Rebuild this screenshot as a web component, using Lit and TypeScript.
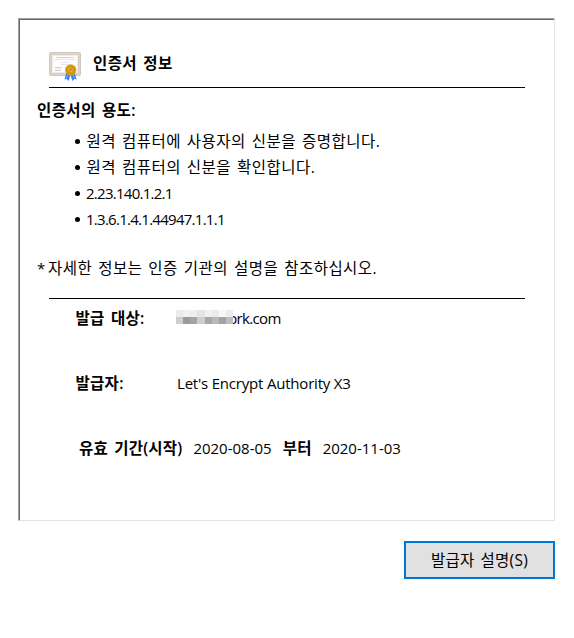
import { LitElement, html, css } from "lit";
import { customElement } from "lit/decorators.js";

const MASK = [
  ["#ebebea", "#f2f2f3", "#eeeeee", "#e4e4e3", "#f0f0f2", "#e8ecee", "#f8f8f8", "#ececed"],
  ["#ced0cc", "#9a9a9b", "#a3a4a4", "#cdcdd0", "#a6a6aa", "#bab8b1", "#a3a4a7", "#bdbdc8"],
];

@customElement("cert-icon")
class CertIcon extends LitElement {
  static styles = css`
    :host { display: block; width: 34px; height: 32px; }
    svg { display: block; }
  `;
  render() {
    return html`<svg width="34" height="32" viewBox="0 0 34 32">
      <rect x=".5" y="2.500" width="31" height="23" rx="1" fill="#d9d0c3" stroke="#cfc7bb"/>
      <rect x="1.500" y="3.500" width="29" height="21" fill="none" stroke="#ddd5c9"/>
      <rect x="3.500" y="5.500" width="25" height="17" fill="#fefefe" stroke="#f1eee9"/>
      <path d="M7 7.500h18" stroke="#c9cee2"/>
      <path d="M5 9.500h22M12 12.500h8M12 14.500h8" stroke="#e4e7f1"/>
      <path d="M6 17.500h7M6 20.500h6" stroke="#ccd0da"/>
      <path d="M6 19h6" stroke="#e6e8ee"/>
      <path d="M17.500 22l-2 7.500 2.200-.4 2 1.900 2-7zM25.500 22l2 7.500-2.200-.4-2 1.900-2-7z" fill="#3c7eea"/>
      <path d="M18.500 25.500l-1 3M24.500 25.500l1 3" stroke="#76acf5" stroke-width="1.200"/>
      <circle cx="21.700" cy="20" r="5.700" fill="#dda31d"/>
      <circle cx="21.700" cy="20" r="4.600" fill="#d1930f"/>
      <circle cx="21.400" cy="19.800" r="2.600" fill="#e0ae2c"/>
      <path d="M20.300 21.200l2.400-2.800" stroke="#b57c0c" stroke-width="1.200"/>
    </svg>`;
  }
}

@customElement("app-root")
class AppRoot extends LitElement {
  static styles = css`
    :host {
      display: block; box-sizing: border-box; width: 574px; height: 638px; padding: 18px 19px 0 18px;
      background: #fff; color: #000; overflow: hidden;
      font: 15px/26px "Open Sans", "Noto Sans CJK KR", sans-serif; white-space: nowrap;
    }
    .panel {
      box-sizing: border-box; height: 503px; border: 1px solid; border-color: #a0a0a0 #e3e3e3 #e3e3e3 #a0a0a0;
    }
    .inner { box-sizing: border-box; height: 501px; border: solid #696969; border-width: 1px 0 0 1px; padding: 28px 29px 0 17px; }
    .head { display: flex; height: 39px; margin-left: 12px; border-bottom: 1px solid #000; }
    .head cert-icon { margin-top: 2px; }
    .title { margin: 2px 0 0 10px; }
    b { font-size: 15.500px; font-weight: 600; letter-spacing: .38px; word-spacing: 2px; }
    .usage { margin-top: 9px; height: 26px; }
    .ko { font-size: 15.500px; letter-spacing: .47px; word-spacing: 1.500px; }
    .star { display: inline-block; width: 11px; }
    ul { margin: 5px 0 0; padding: 0 0 0 38px; list-style: none; }
    li { display: flex; align-items: center; height: 26px; }
    li::before { content: ""; width: 5px; height: 5px; border-radius: 50%; background: #000; margin: 0 6px 0 0; }
    li .ko { margin: -1px 0 0 .5px; }
    .num { letter-spacing: -.73px; }
    .note { margin-top: 23px; height: 26px; }
    .rule { height: 1px; background: #000; margin: 17px 0 0 12px; }
    .field { display: flex; height: 26px; margin: 6px 0 39px 38.500px; }
    .field b { width: 101.500px; letter-spacing: .3px; }
    .mask { display: grid; grid-template-columns: repeat(8, 7.150px); grid-auto-rows: 7px; margin: 5px -5px 0 -1px; position: relative; z-index: 1; height: 14px; }
    .host { letter-spacing: -.65px; }
    .issuer { letter-spacing: -.2px; }
    .date { letter-spacing: 0; }
    .valid { display: flex; gap: 11px; margin-left: 42px; }
    .valid b { letter-spacing: .22px; }
    button {
      display: block; box-sizing: border-box; width: 151px; height: 38px; margin: 20px 0 0 auto; padding: 0;
      border: 2px solid #0078d7; background: #e1e1e1; color: #000; font: inherit;
    }
    button .ko { letter-spacing: .3px; }
  `;
  render() {
    return html`
      <div class="panel"><div class="inner">
        <div class="head"><cert-icon></cert-icon><b class="title">인증서 정보</b></div>
        <div class="usage"><b>인증서의 용도:</b></div>
        <ul>
          <li><span class="ko">원격 컴퓨터에 사용자의 신분을 증명합니다.</span></li>
          <li><span class="ko">원격 컴퓨터의 신분을 확인합니다.</span></li>
          <li><span class="num">2.23.140.1.2.1</span></li>
          <li><span class="num">1.3.6.1.4.1.44947.1.1.1</span></li>
        </ul>
        <div class="note"><span class="star">*</span><span class="ko">자세한 정보는 인증 기관의 설명을 참조하십시오.</span></div>
        <div class="rule"></div>
        <div class="field"><b>발급 대상:</b>
          <span class="mask">${MASK.flat().map((c) => html`<i style="background:${c}"></i>`)}</span>
          <span class="host">ork.com</span></div>
        <div class="field"><b>발급자:</b><span class="issuer">Let's Encrypt Authority X3</span></div>
        <div class="valid"><b>유효 기간(시작)</b><span class="date">2020-08-05</span><b>부터</b><span class="date">2020-11-03</span></div>
      </div></div>
      <button><span class="ko">발급자 설명(S)</span></button>
    `;
  }
}
